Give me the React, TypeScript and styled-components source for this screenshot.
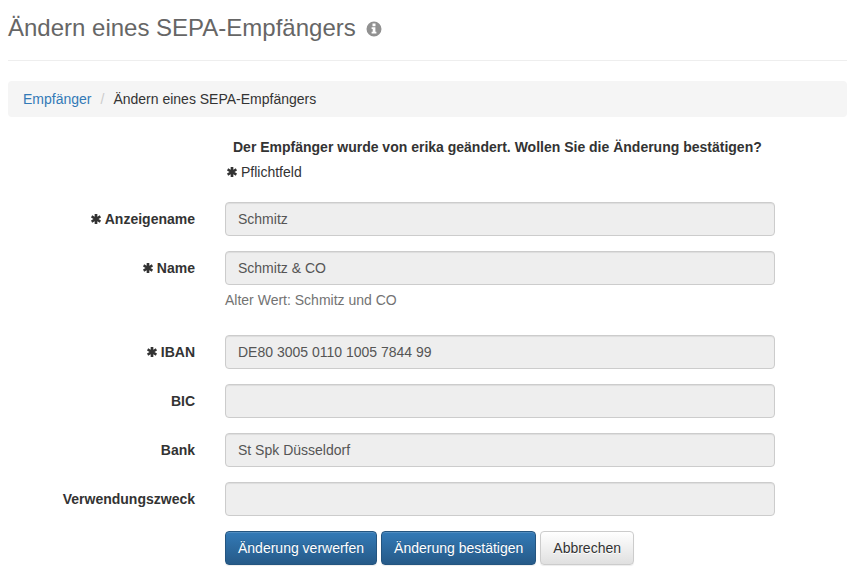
import React from 'react'
import styled, { createGlobalStyle } from 'styled-components'

const GlobalStyle = createGlobalStyle`
    html, body { margin: 0; padding: 0; background: #fff; }
    body {
        font-family: "Liberation Sans", Arial, sans-serif;
        font-size: 14px;
        line-height: 20px;
        color: #333;
    }
`

const Page = styled.div`
    padding: 0 7px 0 8px;
`

const Header = styled.div`
    display: flex;
    align-items: center;
    height: 61px;
    padding-bottom: 4px;
    box-sizing: border-box;
    border-bottom: 1px solid #eee;
    margin-bottom: 20px;
`

const Title = styled.h1`
    margin: 0;
    font-size: 24px;
    line-height: 26px;
    font-weight: 400;
    color: #666;
`

const InfoSvg = styled.svg`
    width: 16px;
    height: 16px;
    margin: 1px 0 0 10px;
    fill: #919191;
`

const Breadcrumb = styled.div`
    display: flex;
    height: 36px;
    box-sizing: border-box;
    padding: 8px 15px;
    background: #f5f5f5;
    border-radius: 4px;
    margin-bottom: 20px;
`

const Crumb = styled.a`
    color: #337ab7;
    text-decoration: none;
`

const Slash = styled.span`
    color: #ccc;
    padding: 0 9px;
`

const Form = styled.div`
    display: flex;
    flex-direction: column;
`

const Row = styled.div<{ $gap?: number }>`
    display: grid;
    grid-template-columns: 187px 550px;
    column-gap: 30px;
    margin-bottom: ${p => p.$gap ?? 15}px;
`

const Notice = styled.div`
    grid-column: 2;
    font-weight: 700;
    padding-left: 8px;
    white-space: nowrap;
`

const Required = styled.div`
    grid-column: 2;
    display: flex;
    align-items: center;
    padding-left: 2px;
`

const StarSvg = styled.svg`
    width: 10px;
    height: 10px;
    margin: 0 4px 1px 0;
    flex: none;
    fill: #333;
`

const Label = styled.label`
    display: flex;
    justify-content: flex-end;
    align-items: center;
    height: 34px;
    font-weight: 700;
    white-space: nowrap;
`

const Field = styled.div`
    grid-column: 2;
`

const Input = styled.div`
    height: 34px;
    box-sizing: border-box;
    padding: 6px 12px;
    background: #eee;
    border: 1px solid #ccc;
    border-radius: 4px;
    box-shadow: inset 0 1px 1px rgba(0, 0, 0, 0.075);
    color: #555;
`

const Help = styled.div`
    color: #737373;
    margin-top: 5px;
    margin-bottom: 10px;
`

const Actions = styled.div`
    grid-column: 2;
    display: flex;
    gap: 4px;
`

const Button = styled.button<{ $primary?: boolean }>`
    height: 34px;
    box-sizing: border-box;
    padding: 6px 12px;
    font: inherit;
    border-radius: 4px;
    border: 1px solid ${p => (p.$primary ? '#245580' : '#ccc')};
    color: ${p => (p.$primary ? '#fff' : '#333')};
    background: ${p =>
        p.$primary
            ? 'linear-gradient(to bottom, #337ab7 0, #265a88 100%)'
            : 'linear-gradient(to bottom, #fff 0, #e0e0e0 100%)'};
    text-shadow: ${p => (p.$primary ? '0 -1px 0 rgba(0,0,0,.2)' : '0 1px 0 #fff')};
    box-shadow: inset 0 1px 0 rgba(255, 255, 255, 0.15), 0 1px 1px rgba(0, 0, 0, 0.075);
`

const Star = () => (
    <StarSvg viewBox="0 0 12 12">
        <path d="M4.4 0h3.2v3.4L10.6 1.6 12 4.3 9 6l3 1.7-1.4 2.7-3-1.8V12H4.4V8.6l-3 1.8L0 7.7 3 6 0 4.3 1.4 1.6l3 1.8z" />
    </StarSvg>
)

const InfoIcon = () => (
    <InfoSvg viewBox="0 0 16 16">
        <path
            fillRule="evenodd"
            d="M8 0.5a7.5 7.5 0 1 1 0 15a7.5 7.5 0 0 1 0-15zM6.5 2.6v2.6h3V2.6zM5.6 6.3v1.7h1.1v2.8H5.6v1.8h4.8v-1.8h-1V6.3z"
        />
    </InfoSvg>
)

const fields = [
    { label: 'Anzeigename', value: 'Schmitz', required: true },
    { label: 'Name', value: 'Schmitz & CO', required: true, old: 'Alter Wert: Schmitz und CO' },
    { label: 'IBAN', value: 'DE80 3005 0110 1005 7844 99', required: true },
    { label: 'BIC', value: '' },
    { label: 'Bank', value: 'St Spk Düsseldorf' },
    { label: 'Verwendungszweck', value: '' }
]

const App = () => {
    return (
        <>
            <GlobalStyle />
            <Page>
                <Header>
                    <Title>Ändern eines SEPA-Empfängers</Title>
                    <InfoIcon />
                </Header>
                <Breadcrumb>
                    <Crumb href="#">Empfänger</Crumb>
                    <Slash>/</Slash>
                    <span>Ändern eines SEPA-Empfängers</span>
                </Breadcrumb>
                <Form>
                    <Row $gap={5}>
                        <Notice>Der Empfänger wurde von erika geändert. Wollen Sie die Änderung bestätigen?</Notice>
                    </Row>
                    <Row $gap={20}>
                        <Required><Star />Pflichtfeld</Required>
                    </Row>
                    {fields.map(f => (
                        <Row key={f.label}>
                            <Label>{f.required && <Star />}{f.label}</Label>
                            <Field>
                                <Input>{f.value}</Input>
                                {f.old && <Help>{f.old}</Help>}
                            </Field>
                        </Row>
                    ))}
                    <Row>
                        <Actions>
                            <Button $primary>Änderung verwerfen</Button>
                            <Button $primary>Änderung bestätigen</Button>
                            <Button>Abbrechen</Button>
                        </Actions>
                    </Row>
                </Form>
            </Page>
        </>
    )
}

export default App
